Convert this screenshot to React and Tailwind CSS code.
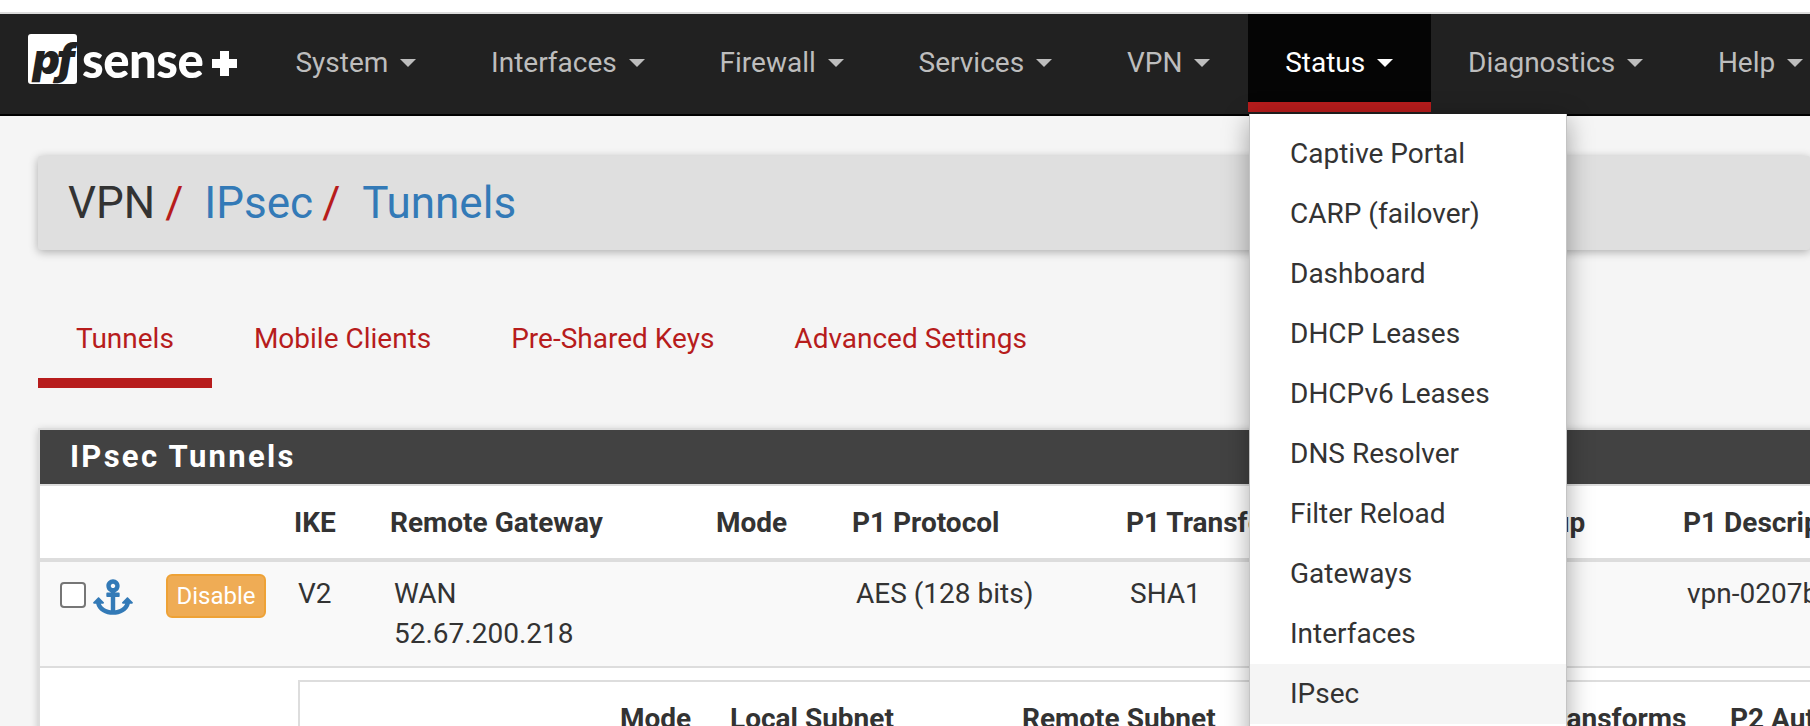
import { FaAnchor } from 'react-icons/fa'

const navItems = ['System', 'Interfaces', 'Firewall', 'Services', 'VPN', 'Status', 'Diagnostics', 'Help']
const statusItems = [
  'Captive Portal',
  'CARP (failover)',
  'Dashboard',
  'DHCP Leases',
  'DHCPv6 Leases',
  'DNS Resolver',
  'Filter Reload',
  'Gateways',
  'Interfaces',
  'IPsec',
]
const tabs = ['Tunnels', 'Mobile Clients', 'Pre-Shared Keys', 'Advanced Settings']
const p1Heads = ['IKE', 'Remote Gateway', 'Mode', 'P1 Protocol', 'P1 Transforms', 'P1 DH-Group', 'P1 Description']
const p2Heads = ['Mode', 'Local Subnet', 'Remote Subnet', 'P2 Protocol', 'P2 Transforms', 'P2 Auth Methods']

function Logo() {
  return (
    <div className="flex items-center w-[258px] pl-[28px] pb-[10px] shrink-0">
      <div className="w-[49px] h-[50px] bg-white rounded-[3px] flex items-center justify-center overflow-hidden shrink-0">
        <span className="font-['Inter',sans-serif] font-black italic text-[42px] leading-none tracking-[-3px] text-[#212121]">pf</span>
      </div>
      <span className="ml-[5px] font-['Lato',sans-serif] font-black text-[49px] leading-none tracking-[-0.5px] text-white">sense</span>
      <div className="relative ml-[9px] w-[25px] h-[25px] mt-[8px] shrink-0">
        <div className="absolute left-0 top-[8px] w-[25px] h-[9px] bg-white" />
        <div className="absolute left-[8px] top-0 w-[9px] h-[25px] bg-white" />
      </div>
    </div>
  )
}

function NavBar() {
  return (
    <nav className="flex h-[102px] bg-[#212121] border-b-2 border-black">
      <Logo />
      {navItems.map((item) => {
        const active = item === 'Status'
        return (
          <div
            key={item}
            className={`flex items-center shrink-0 h-[98px] pt-[10px] px-[37.4px] border-b-[10px] text-[28px] ${
              active ? 'bg-[#050505] border-[#b71c1c] text-white' : 'border-transparent text-[#bdbdbd]'
            }`}
          >
            {item}
            <span
              className={`ml-[12px] w-0 h-0 border-x-[8px] border-x-transparent border-t-[8px] ${
                active ? 'border-t-white' : 'border-t-[#bdbdbd]'
              }`}
            />
          </div>
        )
      })}
    </nav>
  )
}

function StatusMenu() {
  return (
    <div className="absolute left-[1249px] top-[114px] w-[318px] pt-[10px] bg-white border-x border-[#c4c4c4] shadow-[0_6px_24px_rgba(0,0,0,0.35)]">
      {statusItems.map((item) => (
        <div
          key={item}
          className={`h-[60px] pl-[40px] flex items-center text-[28px] text-[#333] ${item === 'IPsec' ? 'bg-[#f5f5f5]' : ''}`}
        >
          {item}
        </div>
      ))}
      <div className="h-[60px]" />
    </div>
  )
}

export default function App() {
  return (
    <div className="relative w-[1810px] h-[726px] overflow-hidden bg-[#f5f5f5] font-['Roboto',sans-serif] text-[#333]">
      <div className="h-[14px] bg-white border-b-2 border-[#dcdcdc]" />
      <NavBar />

      <main className="pl-[38px]">
        {/* breadcrumb */}
        <div className="mt-[40px] h-[94px] pl-[30px] flex items-center bg-[#dfdfdf] rounded-[3px] shadow-[0_2px_10px_rgba(0,0,0,0.3)] text-[44px] whitespace-pre">
          <span>VPN</span>
          <span className="text-[#b71c1c] ml-[10px]">/</span>
          <span className="text-[#337ab7] ml-[21px]">IPsec</span>
          <span className="text-[#b71c1c] ml-[9px]">/</span>
          <span className="text-[#337ab7] ml-[22px]">Tunnels</span>
        </div>

        {/* tabs */}
        <div className="flex mt-[48px]">
          {tabs.map((tab, i) => (
            <div
              key={tab}
              className={`pt-[21px] pb-[19px] px-[38px] leading-[40px] border-b-[10px] text-[28px] text-[#b71c1c] ${
                i === 0 ? 'border-[#b71c1c]' : 'border-transparent ml-[4px]'
              }`}
            >
              {tab}
            </div>
          ))}
        </div>

        {/* panel */}
        <section className="mt-[40px] w-[1800px] bg-white border-l-2 border-t-2 border-[#ddd] shadow-[0_2px_8px_rgba(0,0,0,0.2)]">
          <h2 className="h-[56px] pl-[30px] flex items-center bg-[#424242] border-b-2 border-[#ddd] box-border text-white font-bold text-[31px] tracking-[2.3px]">
            IPsec Tunnels
          </h2>

          <div className="grid grid-cols-[254px_96px_326px_136px_274px_293px_264px_160px] h-[76px] pt-[2px] items-center border-b-4 border-[#ddd] box-border text-[28px] font-bold whitespace-nowrap">
            <div />
            {p1Heads.map((head) => (
              <div key={head}>{head}</div>
            ))}
          </div>

          <div className="grid grid-cols-[254px_96px_326px_136px_274px_293px_264px_160px] h-[106px] pt-[12px] border-b-2 border-[#ddd] box-border bg-[#f9f9f9] text-[28px] leading-[40px] whitespace-nowrap">
            <div className="flex items-start pl-[20px]">
              <div className="mt-[8px] w-[26px] h-[26px] bg-white border-2 border-[#767676] rounded-[4px]" />
              <FaAnchor className="ml-[7px] mt-[3px] text-[#337ab7]" size={40} />
              <button className="ml-[33px] h-[44px] w-[100px] bg-[#efac55] border-2 border-[#eea236] rounded-[6px] text-white text-[24px] leading-none">
                Disable
              </button>
            </div>
            <div className="pl-1">V2</div>
            <div className="pl-1">
              WAN
              <br />
              52.67.200.218
            </div>
            <div />
            <div className="pl-1">AES (128 bits)</div>
            <div className="pl-1">SHA1</div>
            <div />
            <div className="pl-1">vpn-0207b</div>
          </div>

          <div className="pt-[12px] pl-[258px]">
            <div className="grid grid-cols-[320px_110px_292px_248px_230px_230px_200px] h-[76px] items-center bg-white border-l-2 border-t-2 border-[#ddd] text-[28px] font-bold whitespace-nowrap">
              <div />
              {p2Heads.map((head) => (
                <div key={head}>{head}</div>
              ))}
            </div>
          </div>
        </section>
      </main>

      <StatusMenu />
    </div>
  )
}
